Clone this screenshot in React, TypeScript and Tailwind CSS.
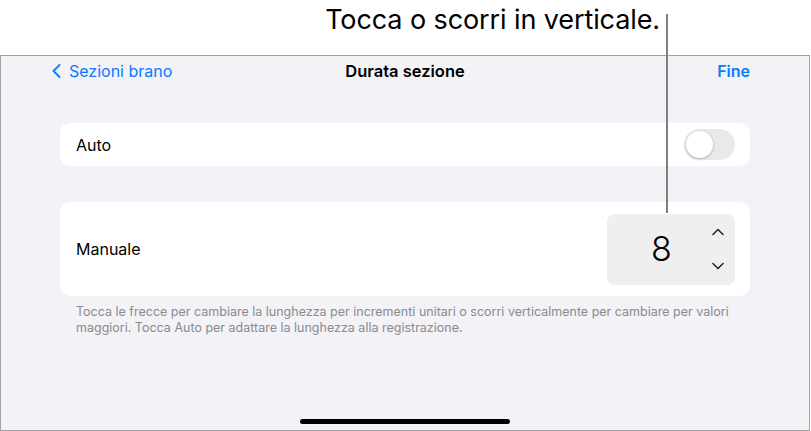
import React from 'react';

const Chevron: React.FC<{ up?: boolean }> = ({ up }) => (
    <svg width="12" height="8" viewBox="0 0 12 8" fill="none">
        <path
            d={up ? 'M1 6.5 L6 1.5 L11 6.5' : 'M1 1.5 L6 6.5 L11 1.5'}
            stroke="#2b2b2b"
            strokeWidth="1.6"
            strokeLinecap="round"
            strokeLinejoin="round"
        />
    </svg>
);

export default function App() {
    return (
        <div className="relative w-[811px] h-[431px] bg-white font-['Inter','Liberation_Sans',sans-serif] overflow-hidden">
            {/* callout */}
            <div className="h-[55px] flex justify-end pr-[151px] pt-[3px]">
                <span className="text-[27px] leading-[34px] text-black tracking-[-0.1px]">Tocca o scorri in verticale.</span>
            </div>
            <div className="absolute left-[666px] top-[14px] w-[2px] h-[199px] bg-[#808080] z-10" />

            {/* device frame */}
            <div className="w-[810px] h-[376px] border border-[#a3a3a3] bg-[#f2f2f7] flex flex-col">
                <div className="h-[30px] flex items-center justify-between pl-[51px] pr-[59px] relative">
                    <div className="flex items-center gap-[8px] text-[#0a7aff]">
                        <svg width="9" height="14" viewBox="0 0 9 14" fill="none">
                            <path d="M7.5 1 L1.5 7 L7.5 13" stroke="#0a7aff" strokeWidth="1.8" strokeLinecap="round" strokeLinejoin="round" />
                        </svg>
                        <span className="text-[16px]">Sezioni brano</span>
                    </div>
                    <span className="absolute left-1/2 -translate-x-1/2 text-[16.5px] font-semibold text-black">Durata sezione</span>
                    <span className="text-[16px] font-semibold text-[#0a7aff]">Fine</span>
                </div>

                <div className="ml-[59px] w-[690px] mt-[37px] h-[43px] bg-white rounded-[10px] flex items-center justify-between pl-[16px] pr-[15px]">
                    <span className="text-[16px] text-black">Auto</span>
                    <div className="w-[51px] h-[31px] rounded-full bg-[#e9e9eb] p-[2px] flex items-center">
                        <div className="w-[27px] h-[27px] rounded-full bg-white shadow-[0_1px_3px_rgba(0,0,0,0.25)]" />
                    </div>
                </div>

                <div className="ml-[59px] w-[690px] mt-[36px] h-[94px] bg-white rounded-[10px] flex items-center justify-between pl-[16px] pr-[15px]">
                    <span className="text-[16px] text-black">Manuale</span>
                    <div className="w-[128px] h-[71px] rounded-[8px] bg-[#efeff0] flex items-center pl-[44px] pr-[11px] justify-between">
                        <span className="text-[34px] font-light text-black leading-none">8</span>
                        <div className="flex flex-col items-center gap-[26px]">
                            <Chevron up />
                            <Chevron />
                        </div>
                    </div>
                </div>

                <p className="ml-[75px] mt-[8px] text-[12.5px] leading-[16px] text-[#8a8a8e]">
                    Tocca le frecce per cambiare la lunghezza per incrementi unitari o scorri verticalmente per cambiare per valori
                    <br />
                    maggiori. Tocca Auto per adattare la lunghezza alla registrazione.
                </p>

                <div className="flex-1" />
                <div className="self-center w-[210px] h-[5px] rounded-full bg-black mb-[6px]" />
            </div>
        </div>
    );
}
